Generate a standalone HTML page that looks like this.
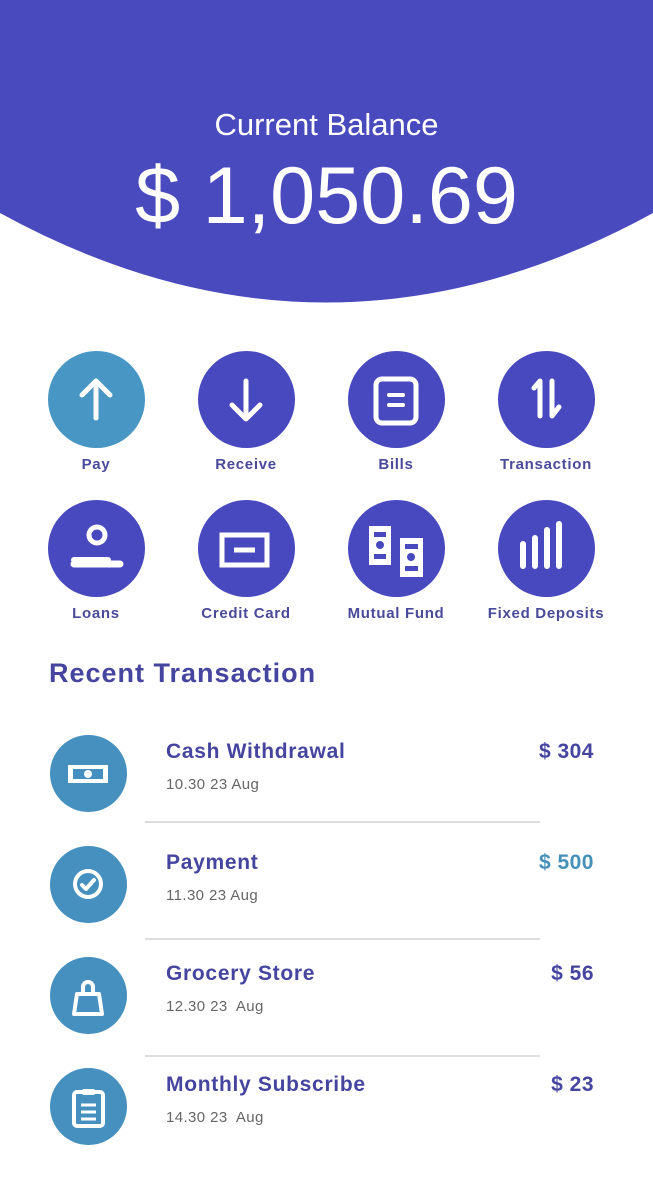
<!DOCTYPE html>
<html><head><meta charset="utf-8"><style>
*{margin:0;padding:0;box-sizing:border-box}
body{width:653px;height:1197px;background:#fff;position:relative;overflow:hidden;font-family:"Liberation Sans",sans-serif}
.abs{position:absolute}
.t1{left:0;width:653px;text-align:center;color:#fff}
.ic{position:absolute;width:97px;height:97px;border-radius:50%;background:#4848bf}
.lab{position:absolute;width:150px;text-align:center;font-weight:bold;font-size:15px;color:#4a4a9a;letter-spacing:0.7px}
.tc{position:absolute;left:50px;width:77px;height:77px;border-radius:50%;background:#4690c0}
.tn{position:absolute;left:166px;font-weight:bold;font-size:21px;color:#4545a0;letter-spacing:0.7px}
.td{position:absolute;left:166px;font-size:15px;color:#666;letter-spacing:0.4px}
.ta{position:absolute;right:59px;font-weight:bold;font-size:21px;color:#4545a0;letter-spacing:0.5px}
.hr{position:absolute;left:145px;width:395px;height:2px;background:#ddd}
svg{position:absolute;left:0;top:0}
</style></head><body>
<svg width="653" height="310"><path d="M0 0H653V213Q326 392 0 213Z" fill="#4a4abf"/></svg>
<div class="abs t1" style="top:107px;font-size:31px">Current Balance</div>
<div class="abs t1" style="top:151px;font-size:81px;line-height:90px">$ 1,050.69</div>

<div class="ic" style="left:48px;top:351px;background:#4896c4"><svg width="97" height="97"><path d="M48 67V30M34 44L48 30L62 44" stroke="#fff" stroke-width="5" fill="none" stroke-linecap="round" stroke-linejoin="round"/></svg></div>
<div class="ic" style="left:198px;top:351px"><svg width="97" height="97"><path d="M48 30V68M34 54L48 68L62 54" stroke="#fff" stroke-width="5" fill="none" stroke-linecap="round" stroke-linejoin="round"/></svg></div>
<div class="ic" style="left:348px;top:351px"><svg width="97" height="97"><rect x="28" y="28" width="40" height="44" rx="6" stroke="#fff" stroke-width="5" fill="none"/><path d="M41 44H55M41 54H55" stroke="#fff" stroke-width="4" stroke-linecap="round"/></svg></div>
<div class="ic" style="left:498px;top:351px"><svg width="97" height="97"><path d="M42 65V30L36 37M54 30V65L61 56" stroke="#fff" stroke-width="5" fill="none" stroke-linecap="round" stroke-linejoin="round"/></svg></div>
<div class="lab" style="left:21px;top:456px">Pay</div>
<div class="lab" style="left:171px;top:456px">Receive</div>
<div class="lab" style="left:321px;top:456px">Bills</div>
<div class="lab" style="left:471px;top:456px">Transaction</div>

<div class="ic" style="left:48px;top:500px"><svg width="97" height="97"><circle cx="49" cy="35" r="8" stroke="#fff" stroke-width="5" fill="none"/><path d="M26 64H72" stroke="#fff" stroke-width="7" stroke-linecap="round"/><path d="M26 60H60" stroke="#fff" stroke-width="6" stroke-linecap="round"/></svg></div>
<div class="ic" style="left:198px;top:500px"><svg width="97" height="97"><rect x="24" y="35" width="45" height="30" stroke="#fff" stroke-width="5" fill="none"/><path d="M36 50H57" stroke="#fff" stroke-width="5"/></svg></div>
<div class="ic" style="left:348px;top:500px"><svg width="97" height="97"><rect x="21" y="26" width="22" height="39" fill="#fff"/><rect x="26" y="32" width="12" height="5" fill="#4848bf"/><rect x="26" y="54" width="12" height="5" fill="#4848bf"/><circle cx="32" cy="45" r="4" fill="#4848bf"/><rect x="52" y="38" width="23" height="39" fill="#fff"/><rect x="57" y="44" width="13" height="5" fill="#4848bf"/><rect x="57" y="66" width="13" height="5" fill="#4848bf"/><circle cx="63" cy="57" r="4" fill="#4848bf"/></svg></div>
<div class="ic" style="left:498px;top:500px"><svg width="97" height="97"><path d="M25 66V44M37 66V38M49 66V30M61 66V24" stroke="#fff" stroke-width="6" stroke-linecap="round"/></svg></div>
<div class="lab" style="left:21px;top:605px">Loans</div>
<div class="lab" style="left:171px;top:605px">Credit Card</div>
<div class="lab" style="left:321px;top:605px">Mutual Fund</div>
<div class="lab" style="left:461px;top:605px;width:170px">Fixed Deposits</div>

<div class="abs" style="left:49px;top:658px;font-weight:bold;font-size:27px;color:#4545a0;letter-spacing:1px">Recent Transaction</div>

<div class="tc" style="top:735px"><svg width="77" height="77"><rect x="18" y="30" width="40" height="18" fill="#fff"/><rect x="23" y="34" width="30" height="10" fill="#4690c0"/><circle cx="38" cy="39" r="4" fill="#fff"/></svg></div>
<div class="tn" style="top:740px">Cash Withdrawal</div><div class="td" style="top:776px">10.30 23 Aug</div><div class="ta" style="top:740px">$ 304</div>
<div class="hr" style="top:821px"></div>

<div class="tc" style="top:846px"><svg width="77" height="77"><circle cx="38" cy="38" r="13" stroke="#fff" stroke-width="4" fill="none"/><path d="M32 39L36 43L44 34" stroke="#fff" stroke-width="4" fill="none" stroke-linecap="round" stroke-linejoin="round"/></svg></div>
<div class="tn" style="top:851px">Payment</div><div class="td" style="top:887px">11.30 23 Aug</div><div class="ta" style="top:851px;color:#4590b8">$ 500</div>
<div class="hr" style="top:938px"></div>

<div class="tc" style="top:957px"><svg width="77" height="77"><path d="M33 36V30A5 5 0 0 1 43 30V36" stroke="#fff" stroke-width="4" fill="none"/><path d="M27 37H49L52 57H24Z" stroke="#fff" stroke-width="4" fill="none" stroke-linejoin="round"/></svg></div>
<div class="tn" style="top:962px">Grocery Store</div><div class="td" style="top:998px">12.30 23&nbsp; Aug</div><div class="ta" style="top:962px">$ 56</div>
<div class="hr" style="top:1055px"></div>

<div class="tc" style="top:1068px"><svg width="77" height="77"><rect x="24" y="24" width="29" height="34" rx="3" stroke="#fff" stroke-width="4" fill="none"/><rect x="32" y="21" width="13" height="6" rx="2" fill="#fff"/><path d="M31 37H46M31 44H46M31 51H46" stroke="#fff" stroke-width="3"/></svg></div>
<div class="tn" style="top:1073px">Monthly Subscribe</div><div class="td" style="top:1109px">14.30 23&nbsp; Aug</div><div class="ta" style="top:1073px">$ 23</div>
</body></html>
